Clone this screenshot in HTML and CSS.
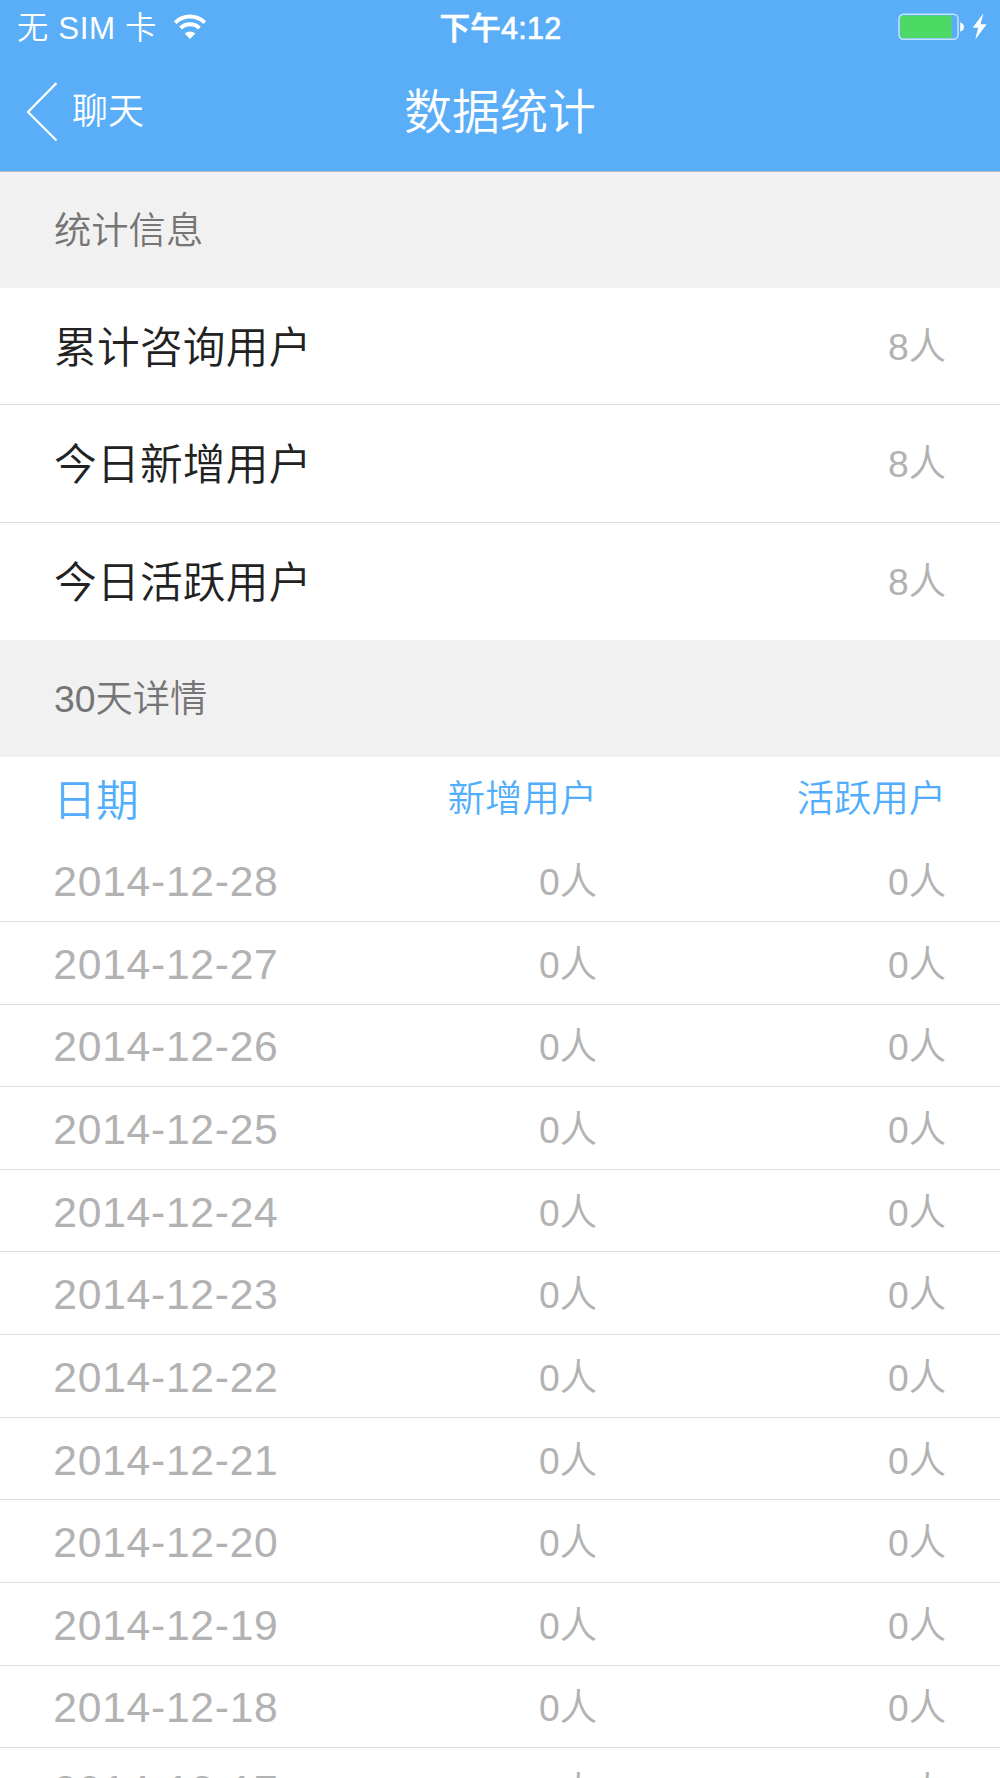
FILE: index.html
```html
<!DOCTYPE html>
<html lang="zh-CN">
<head>
    <meta charset="utf-8">
    <meta name="viewport" content="width=device-width, initial-scale=1">
    <title>数据统计</title>
    <link rel="stylesheet" href="styles.css">
</head>
<body>
    <header>
        <div class="status-bar">
            <div class="carrier">
                <span>无 SIM 卡</span>
                <svg class="wifi" width="34" height="26" viewBox="0 0 34 26">
                    <path d="M2.2 8.6a21 21 0 0 1 29.6 0" fill="none" stroke="#fff" stroke-width="4"/>
                    <path d="M7.6 14.2a13.3 13.3 0 0 1 18.8 0" fill="none" stroke="#fff" stroke-width="4"/>
                    <path d="M17 25l-5.3-5.4a7.6 7.6 0 0 1 10.6 0z" fill="#fff"/>
                </svg>
            </div>
            <div class="time">下午4:12</div>
            <div class="power">
                <svg width="90" height="28" viewBox="0 0 90 28">
                    <rect x="1" y="1.3" width="59" height="25" rx="4.5" fill="none" stroke="#fff" stroke-opacity=".65" stroke-width="1.5"/>
                    <path d="M5 2.5h48.5v22.6H5a2.8 2.8 0 0 1-2.8-2.8V5.3A2.8 2.8 0 0 1 5 2.5z" fill="#4cd964"/>
                    <path d="M62.2 9.5c5 .8 5 8.3 0 9.1z" fill="#fff"/>
                    <path d="M85.5.3L74.6 14.8h5.5l-2.8 11.7L88.6 11.2h-6.1z" fill="#fff"/>
                </svg>
            </div>
        </div>
        <nav>
            <a class="back">
                <svg width="32" height="60" viewBox="0 0 32 60">
                    <path d="M30.5 1L2 30l28.5 28.5" fill="none" stroke="#fff" stroke-width="2.3"/>
                </svg>
                <span>聊天</span>
            </a>
            <h1>数据统计</h1>
        </nav>
    </header>

    <h2>统计信息</h2>
    <ul class="summary">
        <li><span>累计咨询用户</span><em>8人</em></li>
        <li><span>今日新增用户</span><em>8人</em></li>
        <li><span>今日活跃用户</span><em>8人</em></li>
    </ul>

    <h2>30天详情</h2>
    <ul class="details">
        <li class="head"><span>日期</span><em>新增用户</em><em>活跃用户</em></li>
        <li><span>2014-12-28</span><em>0人</em><em>0人</em></li>
        <li><span>2014-12-27</span><em>0人</em><em>0人</em></li>
        <li><span>2014-12-26</span><em>0人</em><em>0人</em></li>
        <li><span>2014-12-25</span><em>0人</em><em>0人</em></li>
        <li><span>2014-12-24</span><em>0人</em><em>0人</em></li>
        <li><span>2014-12-23</span><em>0人</em><em>0人</em></li>
        <li><span>2014-12-22</span><em>0人</em><em>0人</em></li>
        <li><span>2014-12-21</span><em>0人</em><em>0人</em></li>
        <li><span>2014-12-20</span><em>0人</em><em>0人</em></li>
        <li><span>2014-12-19</span><em>0人</em><em>0人</em></li>
        <li><span>2014-12-18</span><em>0人</em><em>0人</em></li>
        <li><span>2014-12-17</span><em>0人</em><em>0人</em></li>
    </ul>
</body>
</html>
```
FILE: styles.css
```css
* {
    box-sizing: border-box;
}
html, body {
    height: 1778px;
    overflow: hidden;
}
body {
    margin: 0;
    background: #fff;
    font-family: "Liberation Sans", "Noto Sans CJK SC", sans-serif;
    font-weight: 350;
}
h1, h2, ul {
    margin: 0;
    padding: 0;
    font-weight: 350;
}
ul {
    list-style: none;
}
em {
    font-style: normal;
}

/* header */
header {
    height: 172px;
    background: #5aaef8;
    border-bottom: 1px solid #b5bcc4;
    color: #fff;
}
.status-bar {
    display: grid;
    grid-template-columns: 1fr auto 1fr;
    align-items: center;
    height: 54px;
    padding: 0 12px 0 17px;
    font-size: 31px;
    line-height: 51px;
}
.carrier {
    display: flex;
    align-items: center;
    gap: 16px;
    font-size: 31.3px;
    letter-spacing: .6px;
}
.carrier span, .time {
    padding-top: 3px;
}
.time {
    padding-right: 4px;
    font-size: 30.5px;
    font-weight: 500;
    letter-spacing: .3px;
    -webkit-text-stroke: .7px #fff;
}
.power {
    display: flex;
    justify-content: flex-end;
}
nav {
    display: grid;
    grid-template-columns: 1fr auto 1fr;
    align-items: center;
    height: 116px;
    padding: 0 26px;
}
.back {
    display: flex;
    align-items: center;
    gap: 14px;
    font-size: 36px;
}
.back span, h1 {
    padding-bottom: 8px;
}
h1 {
    font-size: 48px;
}

/* section titles */
h2 {
    height: 117px;
    padding-left: 54px;
    background: #f1f1f1;
    color: #757575;
    font-size: 37.3px;
    line-height: 118px;
}
header + h2 {
    height: 116px;
}

/* totals */
.summary li {
    display: flex;
    justify-content: space-between;
    align-items: center;
    height: 117.3px;
    padding: 0 54px 3px;
    border-bottom: 1px solid #dcdcdc;
    color: #222;
    font-size: 42.67px;
    letter-spacing: .3px;
}
.summary li:last-child {
    border-bottom: 0;
    height: 117px;
}
.summary em, .details em {
    font-size: 37.3px;
    letter-spacing: 0;
}
.summary em {
    padding-bottom: 1px;
    color: #b2b2b2;
}

/* 30 days */
.details li {
    display: grid;
    grid-template-columns: 1fr 300px 349px;
    align-items: center;
    height: 82.65px;
    padding: 0 54px 0 53.3px;
    border-bottom: 1px solid #dedede;
    color: #b2b2b2;
    font-size: 42.67px;
    white-space: nowrap;
}
.details li.head {
    padding-bottom: 1px;
    border-bottom: 0;
    color: #52aefc;
}
.details em {
    padding-bottom: 2px;
    text-align: right;
}
.details li:not(.head) span {
    padding-top: 3px;
    letter-spacing: .7px;
}
```
